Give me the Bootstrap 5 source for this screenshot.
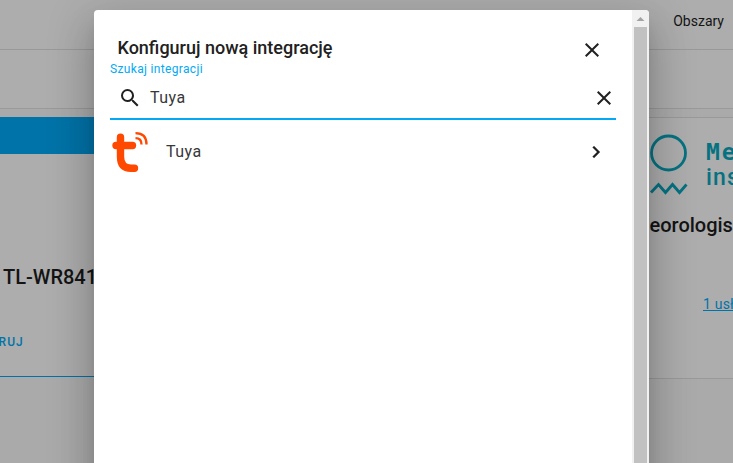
<!DOCTYPE html>
<html lang="pl">
<head>
<meta charset="utf-8">
<meta name="viewport" content="width=device-width, initial-scale=1">
<title>Konfiguruj nową integrację</title>
<link href="https://cdn.jsdelivr.net/npm/bootstrap@5.3.0/dist/css/bootstrap.min.css" rel="stylesheet">
<style>
body { font-family: Roboto, "Liberation Sans", sans-serif; background: #aaa; color: #141414; height: 463px; overflow: hidden; }
.page { height: 463px; }
.topbar { height: 50px; border-bottom: 1px solid #999; background: #adadad; font-size: 14px; padding: 0 9px 6px 0; }
.toolbar { height: 59px; border-bottom: 1px solid #999; background: #adadad; margin-bottom: 8px; }
.dev-left { width: 300px; height: 260px; background: #adadad; border-bottom: 1px solid #0073a8; }
.strip { height: 37px; background: #0073a8; }
.dev-title { font-size: 20px; font-weight: 500; line-height: 28px; white-space: nowrap; }
.dev-left .dev-title { padding: 109px 0 0 3px; }
.setup { color: #0073a8; font-size: 12px; font-weight: 500; letter-spacing: 1.1px; line-height: 16px; padding-top: 43px; margin-left: -1.5px; }
.dev-right { width: 85px; height: 262px; background: #adadad; border-top: 1px solid #999; border-bottom: 1px solid #999; overflow: hidden; }
.dev-right .dev-title { padding-left: 1.5px; }
.met { padding-top: 16px; height: 93px; }
.met-name { font-size: 23px; line-height: 25px; font-weight: 500; color: #067281; letter-spacing: 1.2px; margin: 6px 0 0 18px; }
.met-name .caps { display: block; font-family: "DejaVu Sans Mono", monospace; font-weight: 700; height: 25px; letter-spacing: 1.8px; }
.service { color: #0073a8; font-size: 14px; line-height: 20px; margin: 55px 0 0 55px; white-space: nowrap; letter-spacing: .2px; }
.sheet { top: 10px; left: 94px; width: 555px; height: 453px; background: #fff; border-radius: 4px 4px 0 0; color: #212121; overflow: hidden; }
.shade { inset: 0; overflow: hidden; }
.shade-box { margin: 10px 0 0 94px; width: 555px; height: 600px; border-radius: 4px; box-shadow: 0 11px 15px -7px rgba(0,0,0,.2), 0 24px 38px 3px rgba(0,0,0,.14), 0 9px 46px 8px rgba(0,0,0,.12); }
.sheet-main { padding: 0 16px; }
.sheet-title { height: 51px; padding: 24px 12px 0 7.5px; }
.sheet-title h1 { font-size: 18px; font-weight: 500; line-height: 28px; margin: 0; }
.sheet-title svg { margin-top: 4px; }
.search-label { font-size: 12px; line-height: 16px; color: #03a9f4; letter-spacing: .34px; }
.search-row { height: 43px; border-bottom: 2px solid #03a9f4; padding-left: 8px; font-size: 16px; letter-spacing: .45px; }
.result { height: 64px; font-size: 16px; letter-spacing: .45px; padding-right: 8px; }
.item-text { color: #383838; }
.scroll { width: 17px; background: #f1f1f1; }
.thumb { width: 13px; background: #c1c1c1; }
</style>
<script src="https://cdn.jsdelivr.net/npm/bootstrap@5.3.0/dist/js/bootstrap.bundle.min.js"></script>
</head>
<body>
<div class="page d-flex flex-column overflow-hidden">
  <header class="topbar d-flex align-items-center justify-content-end">Obszary</header>
  <div class="toolbar"></div>
  <main class="d-flex justify-content-between align-items-start">
    <section class="dev-left">
      <div class="strip"></div>
      <div class="dev-title">TL-WR841</div>
      <div class="setup">RUJ</div>
    </section>
    <section class="dev-right">
      <div class="met d-flex align-items-start">
        <svg class="flex-shrink-0" width="40" height="62" viewBox="0 0 40 62" fill="none" stroke="#067281" stroke-width="2.800"><circle cx="20.500" cy="19" r="17"/><path d="M3 58.500l7.500-8 7 8 7-8 7 8 7-8"/></svg>
        <div class="met-name"><span class="caps">Me</span>ins</div>
      </div>
      <div class="dev-title">eorologis</div>
      <div class="service text-decoration-underline">1 usł</div>
    </section>
  </main>
</div>

<div class="shade position-absolute"><div class="shade-box"></div></div>
<div class="sheet position-absolute d-flex" role="dialog" aria-labelledby="dialog-title">
  <div class="sheet-main flex-grow-1">
    <div class="sheet-title d-flex justify-content-between">
      <h1 id="dialog-title">Konfiguruj nową integrację</h1>
      <svg width="24" height="24" viewBox="0 0 24 24" fill="currentColor"><path d="M19 6.410L17.590 5 12 10.590 6.410 5 5 6.410 10.590 12 5 17.590 6.410 19 12 13.410 17.590 19 19 17.590 13.410 12z"/></svg>
    </div>
    <div class="search-label">Szukaj integracji</div>
    <div class="search-row d-flex align-items-center">
      <svg width="24" height="24" viewBox="0 0 24 24" fill="currentColor"><path d="M9.500 3A6.500 6.500 0 0 1 16 9.500c0 1.610-.59 3.090-1.560 4.230l.27.270h.79l5 5-1.500 1.500-5-5v-.79l-.27-.27A6.516 6.516 0 0 1 9.500 16a6.500 6.500 0 0 1 0-13m0 2C7 5 5 7 5 9.500S7 14 9.500 14 14 12 14 9.500 12 5 9.500 5z"/></svg>
      <span class="item-text ms-2 flex-grow-1">Tuya</span>
      <svg width="24" height="24" viewBox="0 0 24 24" fill="currentColor"><path d="M19 6.410L17.590 5 12 10.590 6.410 5 5 6.410 10.590 12 5 17.590 6.410 19 12 13.410 17.590 19 19 17.590 13.410 12z"/></svg>
    </div>
    <div class="result d-flex align-items-center">
      <svg width="40" height="40" viewBox="0 0 40 40" fill="none" stroke="#ff4800" stroke-linecap="round"><path stroke-width="7.400" d="M10.500 5.200v19.500q0 11.500 10.500 11.500h3.500M6 13.500h16.500"/><path stroke-width="2.300" stroke-linecap="butt" d="M25.500 1.200q11 0 11 11.300M25.500 6.200q6 0 6 6.300"/></svg>
      <span class="item-text flex-grow-1 ps-3">Tuya</span>
      <svg width="24" height="24" viewBox="0 0 24 24" fill="currentColor" stroke="currentColor" stroke-width=".25"><path d="M8.590 16.580L13.170 12 8.590 7.410 10 6l6 6-6 6z"/></svg>
    </div>
  </div>
  <div class="scroll d-flex flex-column align-items-center">
    <svg class="flex-shrink-0" width="17" height="17" viewBox="0 0 17 17" fill="#a3a3a3"><path d="M4.500 11l4-4 4 4z"/></svg>
    <div class="thumb flex-grow-1"></div>
  </div>
</div>
</body>
</html>
